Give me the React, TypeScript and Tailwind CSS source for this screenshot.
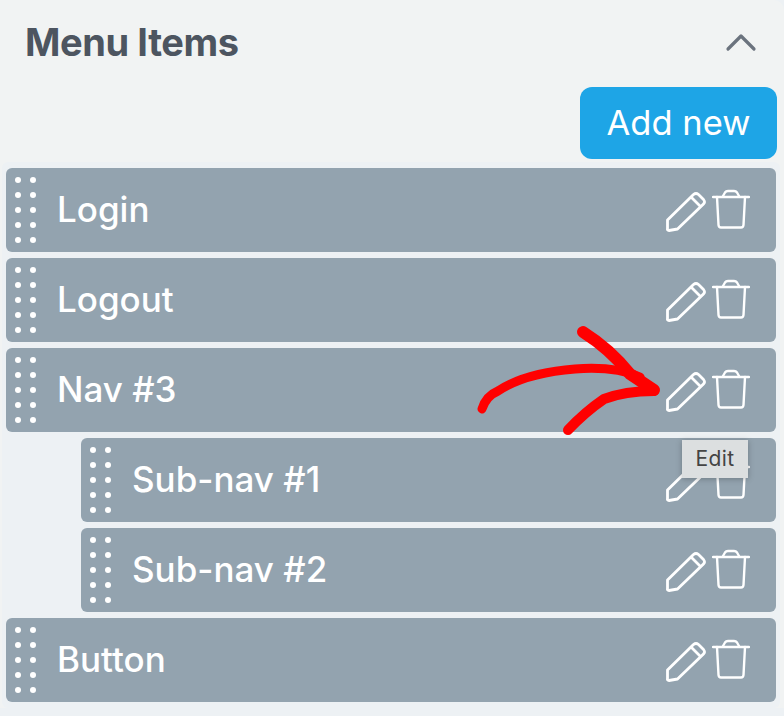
const font = "font-['Inter','Liberation_Sans',sans-serif]"

function Pencil() {
  return (
    <svg width="40" height="40" viewBox="0 0 40 40" fill="none" stroke="white" strokeWidth="2.8" strokeLinejoin="round" strokeLinecap="round" className="mt-[3px] shrink-0">
      <path d="M1.5 28 L27.5 2.5 Q30 0.5 32.5 2.5 L37.5 7.5 Q39.5 10 37.5 12 L11.5 37 L3 38.5 Q1 38.5 1.5 36.5 Z" />
      <path d="M25.5 5.5 L34 14" />
    </svg>
  )
}

function Trash() {
  return (
    <svg width="38" height="40" viewBox="0 0 38 40" fill="none" stroke="white" strokeWidth="2.4" strokeLinejoin="round" strokeLinecap="round" className="mt-[-2px] shrink-0">
      <path d="M1 8 H37" />
      <path d="M11 7 L13 3.5 Q14 2 16 2 H22 Q24 2 25 3.5 L27 7" />
      <path d="M5 8 L6.5 36 Q6.7 38.5 9 38.5 H29 Q31.3 38.5 31.5 36 L33 8" />
    </svg>
  )
}

function Row({ label, nested }: { label: string; nested?: boolean }) {
  return (
    <div className={`flex h-[84px] items-center rounded-[6px] bg-[#93a3af] ${nested ? 'ml-[75px]' : ''}`}>
      <div className="ml-[9px] grid w-[21px] grid-cols-2 gap-x-[9px] gap-y-[9px]">
        {Array.from({ length: 10 }).map((_, i) => (
          <span key={i} className="h-[6px] w-[6px] rounded-full bg-white" />
        ))}
      </div>
      <span className={`ml-[21px] mt-[-2px] flex-1 text-[35px] font-[450] leading-none text-white ${font}`}>{label}</span>
      <div className="mr-[26px] flex items-center gap-[6px]">
        <Pencil />
        <Trash />
      </div>
    </div>
  )
}

export default function App() {
  return (
    <div className="relative h-[716px] w-[784px] overflow-hidden bg-[#edf1f4]">
      <div className="h-[708px] rounded-tr-[10px] bg-[#f1f3f3] pr-[7px]">
        <div className="flex h-[83px] items-center justify-between pl-[25px] pr-[20px]">
          <h2 className={`text-[38px] font-bold leading-none tracking-[-0.4px] text-[#4d5560] ${font}`}>Menu Items</h2>
          <svg width="32" height="20" viewBox="0 0 32 20" fill="none" stroke="#6b737e" strokeWidth="3.2" strokeLinecap="round" strokeLinejoin="round">
            <path d="M3 17 L16 4 L29 17" />
          </svg>
        </div>
        <div className="mt-[4px] flex justify-end">
          <button className={`flex h-[72px] w-[197px] items-center justify-center rounded-[12px] bg-[#1ea5e6] text-[34.5px] leading-none text-white ${font}`}>
            Add new
          </button>
        </div>
        <div className="ml-[2px] mr-[-3px] mt-[3px] flex h-[546px] flex-col gap-[6px] rounded-[6px] bg-[#edf1f4] px-[4px] py-[6px]">
          <Row label="Login" />
          <Row label="Logout" />
          <Row label="Nav #3" />
          <Row label="Sub-nav #1" nested />
          <Row label="Sub-nav #2" nested />
          <Row label="Button" />
        </div>
      </div>

      {/* hand drawn arrow */}
      <svg className="absolute left-[470px] top-[320px]" width="200" height="120" viewBox="470 320 200 120" fill="none" stroke="#ff0000" strokeLinecap="round" strokeLinejoin="round">
        <path d="M482 409 Q486 396 498 391 Q525 373 575 369 Q615 366 640 377" strokeWidth="9" />
        <path d="M583 332 Q610 349 630 374 L654 390" strokeWidth="12" />
        <path d="M568 430 Q585 412 604 399 Q625 391 654 391" strokeWidth="10" />
      </svg>

      {/* tooltip */}
      <div className={`absolute left-[682px] top-[440px] flex h-[38px] w-[66px] items-center justify-center bg-[#dcdfe0] text-[21px] tracking-[0.4px] text-[#444] shadow-[0_1px_6px_rgba(0,0,0,0.25)] ${font}`}>
        Edit
      </div>
    </div>
  )
}
